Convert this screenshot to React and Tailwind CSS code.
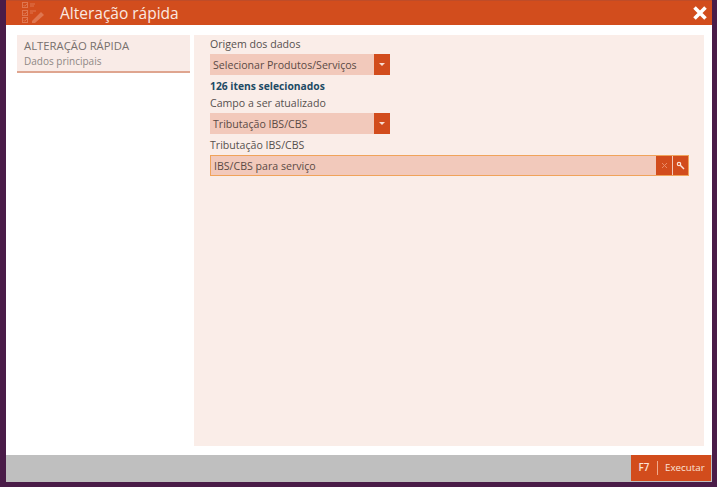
import React from "react";

const font = { fontFamily: '"Open Sans", "Noto Sans", sans-serif' };

function Caret() {
  return (
    <div className="w-[16px] bg-[#d24c1c] flex items-center justify-center">
      <div className="w-0 h-0 border-l-[3px] border-r-[3px] border-t-[3px] border-l-transparent border-r-transparent border-t-[#f8ddd2]" />
    </div>
  );
}

function Select({ children }) {
  return (
    <div className="w-[180px] h-[21px] bg-[#f2c9bb] flex">
      <div className="flex-1 pl-[3px] text-[10.6px] leading-[23px] text-[#5b4a45] whitespace-nowrap">{children}</div>
      <Caret />
    </div>
  );
}

export default function App() {
  return (
    <div className="w-[717px] h-[487px] bg-[#4a1c48] overflow-hidden" style={font}>
      <div className="ml-[6px] w-[706px] h-[482px] flex flex-col bg-white">
        <div className="h-[25px] bg-[#d24d1d] border-t border-[#bf4c28] flex items-center shrink-0 relative">
          <svg width="24" height="22" viewBox="0 0 24 22" className="ml-[16px] shrink-0" fill="none" stroke="#df7650" strokeWidth="1">
            <rect x="0.5" y="0.5" width="5" height="5" />
            <rect x="0.5" y="8.5" width="5" height="5" />
            <rect x="0.5" y="15.5" width="5" height="5" />
            <path d="M1.5 3l1.2 1.2L6 1M1.5 11l1.2 1.2L6 9M1.5 18l1.2 1.2L6 16" />
            <path d="M8 2h5M8 4h4M8 9h6M8 11h3" />
            <path d="M10 19l9-9 3 3-9 8h-3z" fill="#df7650" stroke="none" />
          </svg>
          <div className="ml-[14px] text-[15.5px] leading-[24px] text-[#fbe9e1] whitespace-nowrap">Alteração rápida</div>
          <svg width="16" height="16" viewBox="0 0 16 16" className="absolute right-[4px] top-[4px]">
            <path d="M2.5 2.5l11 11M13.5 2.5l-11 11" stroke="#ffffff" strokeWidth="3.6" />
          </svg>
        </div>
        <div className="flex-1 flex pl-[11px] pr-[8px] pt-[10px] pb-[9px] gap-[4px]">
          <div className="w-[173px] h-[38px] bg-[#f9ebe7] border-b-2 border-[#dfa58f] pl-[7px] pt-[3px] shrink-0">
            <div className="text-[11.3px] leading-[16px] text-[#77706d] whitespace-nowrap">ALTERAÇÃO RÁPIDA</div>
            <div className="text-[10px] leading-[14px] text-[#8f8885] whitespace-nowrap">Dados principais</div>
          </div>
          <div className="flex-1 bg-[#faede8] pl-[16px] pr-[15px] pt-[2px] text-[#56504e]">
            <div className="text-[10.6px] leading-[15px] mb-[2px]">Origem dos dados</div>
            <Select>Selecionar Produtos/Serviços</Select>
            <div className="text-[10.3px] leading-[15px] font-bold text-[#1e4a64] mt-[4px]">126 itens selecionados</div>
            <div className="text-[10.6px] leading-[15px] mt-[2px] mb-[2px]">Campo a ser atualizado</div>
            <Select>Tributação IBS/CBS</Select>
            <div className="text-[10.6px] leading-[15px] mt-[4px] mb-[2px]">Tributação IBS/CBS</div>
            <div className="h-[21px] bg-[#f2c9bb] border border-[#f0a35a] flex">
              <div className="flex-1 pl-[3px] text-[10.6px] leading-[20px] text-[#5b4a45]">IBS/CBS para serviço</div>
              <div className="w-[16px] bg-[#d24c1c] flex items-center justify-center">
                <svg width="7" height="7" viewBox="0 0 7 7"><path d="M1 1l5 5M6 1L1 6" stroke="#e98a66" strokeWidth="1" /></svg>
              </div>
              <div className="w-[15px] ml-px bg-[#d24c1c] flex items-center justify-center">
                <svg width="9" height="9" viewBox="0 0 9 9" fill="none" stroke="#fbe3d8">
                  <circle cx="3" cy="3" r="1.7" strokeWidth="1.2" />
                  <path d="M4.3 4.3L8 8" strokeWidth="1.5" />
                </svg>
              </div>
            </div>
          </div>
        </div>
        <div className="h-[27px] bg-[#bfbfbf] flex justify-end shrink-0">
          <div className="h-[26px] mr-px w-[80px] bg-[#d24c1c] flex items-center text-[9.8px] text-[#fbe3d8]">
            <span className="w-[26px] text-center font-semibold">F7</span>
            <span className="w-px h-[14px] bg-[#f0a98c]" />
            <span className="pl-[7px]">Executar</span>
          </div>
        </div>
      </div>
    </div>
  );
}
